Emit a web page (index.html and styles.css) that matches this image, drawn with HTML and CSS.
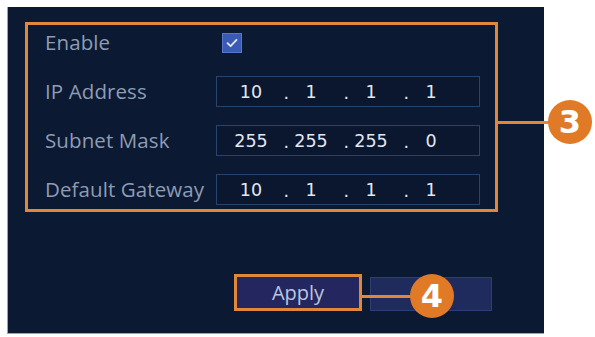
FILE: index.html
```html
<!DOCTYPE html>
<html>
<head>
<meta charset="utf-8">
<link rel="stylesheet" href="styles.css">
</head>
<body>
<div class="panel">
  <div class="form">
    <div class="row">
      <div class="label">Enable</div>
      <div class="field">
        <span class="check">
          <svg width="14" height="14" viewBox="0 0 14 14"><path d="M2.5 7.2 L5.6 10.2 L11.5 3.8" fill="none" stroke="#dfe8fb" stroke-width="1.8" stroke-linecap="round" stroke-linejoin="round"/></svg>
        </span>
      </div>
    </div>
    <div class="row">
      <div class="label">IP Address</div>
      <div class="ip">
        <span class="seg">10</span><span class="dot">.</span><span class="seg">1</span><span class="dot">.</span><span class="seg">1</span><span class="dot">.</span><span class="seg">1</span>
      </div>
    </div>
    <div class="row">
      <div class="label">Subnet Mask</div>
      <div class="ip">
        <span class="seg">255</span><span class="dot">.</span><span class="seg">255</span><span class="dot">.</span><span class="seg">255</span><span class="dot">.</span><span class="seg">0</span>
      </div>
    </div>
    <div class="row">
      <div class="label">Default Gateway</div>
      <div class="ip">
        <span class="seg">10</span><span class="dot">.</span><span class="seg">1</span><span class="dot">.</span><span class="seg">1</span><span class="dot">.</span><span class="seg">1</span>
      </div>
    </div>
  </div>
  <div class="buttons">
    <div class="btn btn-apply">Apply</div>
    <div class="btn btn-other"></div>
  </div>

  <div class="callout-box"></div>
  <div class="line line-3"></div>
  <div class="badge badge-3">3</div>
  <div class="line line-4"></div>
  <div class="badge badge-4">4</div>
</div>
</body>
</html>
```

FILE: styles.css
```css
html, body {
  margin: 0;
  padding: 0;
  background: #ffffff;
}
body {
  width: 595px;
  height: 337px;
  overflow: hidden;
  font-family: "Open Sans", "DejaVu Sans", sans-serif;
}
.panel {
  position: relative;
  margin: 7px 0 0 7px;
  width: 537px;
  height: 327px;
  box-sizing: border-box;
  background: #0b1932;
  border-left: 1px solid #9aa6b6;
  border-bottom: 1px solid #9aa6b6;
  display: flex;
  flex-direction: column;
}
.form {
  padding: 20px 0 0 37px;
  display: flex;
  flex-direction: column;
  gap: 18px;
}
.row {
  display: flex;
  align-items: center;
  height: 31px;
}
.label {
  width: 171px;
  color: #8e9cb4;
  font-size: 20.5px;
  line-height: 31px;
  white-space: nowrap;
  letter-spacing: 0.1px;
}
.field {
  display: flex;
  align-items: center;
  height: 31px;
}
.check {
  margin-left: 6px;
  width: 20px;
  height: 20px;
  box-sizing: border-box;
  background: #3a5ab6;
  border: 1px solid #5676cf;
  display: flex;
  align-items: center;
  justify-content: center;
}
.ip {
  width: 264px;
  height: 31px;
  box-sizing: border-box;
  border: 1px solid #27446e;
  background: #0a172f;
  display: flex;
  align-items: center;
  padding-left: 13px;
  font-family: "DejaVu Sans", sans-serif;
  font-size: 17.5px;
  color: #e2e8f2;
}
.seg {
  width: 42px;
  text-align: center;
}
.dot {
  width: 18px;
  text-align: right;
  padding-right: 1px;
  padding-top: 3px;
  box-sizing: border-box;
}
.buttons {
  display: flex;
  gap: 11px;
  margin-top: 72px;
  padding-left: 229px;
}
.btn {
  width: 122px;
  height: 31px;
  box-sizing: border-box;
}
.btn-apply {
  background: #24275f;
  outline: 3px solid #e0873a;
  color: #b8c5df;
  font-size: 20px;
  line-height: 31px;
  text-align: center;
}
.btn-other {
  background: #1f2a5d;
  border: 1px solid #2b3e78;
  height: 34px;
}
.callout-box {
  position: absolute;
  left: 17px;
  top: 15px;
  width: 473px;
  height: 190px;
  box-sizing: border-box;
  border: 3px solid #e0873a;
}
.line {
  position: absolute;
  height: 3px;
  background: #e0873a;
}
.line-3 {
  left: 490px;
  top: 114px;
  width: 54px;
}
.line-4 {
  left: 352px;
  top: 288px;
  width: 55px;
}
.badge {
  position: absolute;
  width: 44px;
  height: 44px;
  border-radius: 50%;
  background: #e07a27;
  color: #ffffff;
  font-family: "DejaVu Sans", sans-serif;
  font-weight: bold;
  font-size: 32px;
  line-height: 44px;
  text-align: center;
}
.badge-3 {
  left: 540px;
  top: 93px;
}
.badge-4 {
  left: 402px;
  top: 267px;
}
```
